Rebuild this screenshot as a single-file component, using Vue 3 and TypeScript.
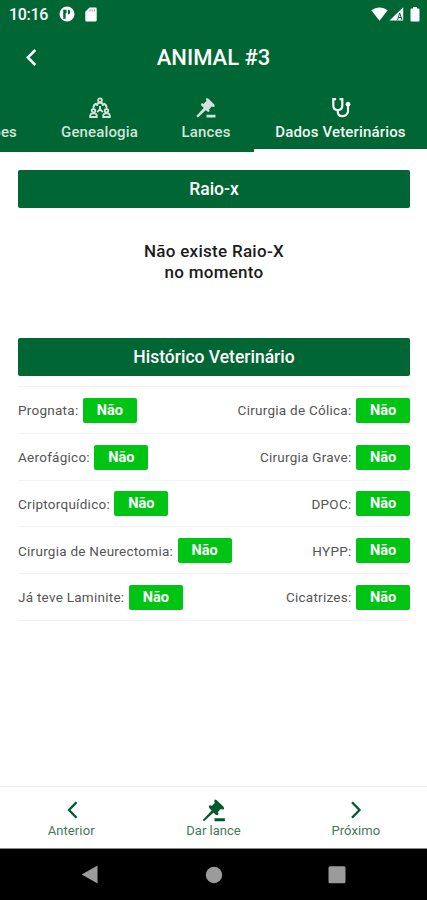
<script setup lang="ts">
interface Exam {
  label: string
  value: string
}

const rows: [Exam, Exam][] = [
  [{ label: 'Prognata:', value: 'Não' }, { label: 'Cirurgia de Cólica:', value: 'Não' }],
  [{ label: 'Aerofágico:', value: 'Não' }, { label: 'Cirurgia Grave:', value: 'Não' }],
  [{ label: 'Criptorquídico:', value: 'Não' }, { label: 'DPOC:', value: 'Não' }],
  [{ label: 'Cirurgia de Neurectomia:', value: 'Não' }, { label: 'HYPP:', value: 'Não' }],
  [{ label: 'Já teve Laminite:', value: 'Não' }, { label: 'Cicatrizes:', value: 'Não' }],
]
</script>

<template>
  <div class="screen">
    <header class="top">
      <div class="status">
        <span class="clock">10:16</span>
        <svg class="s-app" width="16" height="16" viewBox="0 0 16 16">
          <circle cx="8" cy="8" r="7.5" fill="#fff" />
          <path d="M4.200 3.800H7.600v3.400H6.600v5.600H4.200zM9 3.800a2.300 2.300 0 1 1 0 4.600z" fill="#006633" />
        </svg>
        <svg class="s-sd" width="12" height="15" viewBox="0 0 12 15">
          <path d="M4.500.5h6A1.200 1.200 0 0 1 11.700 1.700v11.600a1.200 1.200 0 0 1-1.200 1.200h-9A1.200 1.200 0 0 1 .3 13.300V4.700z" fill="#fff" />
          <path d="M5 2.500v2M7.200 2.500v2M9.400 2.500v2" stroke="#006633" stroke-width=".8" opacity=".75" />
        </svg>
        <span class="spacer"></span>
        <svg width="17" height="14" viewBox="0 0 17 14">
          <path d="M.3 3.300C5 -.6 12 -.6 16.700 3.300L8.500 13.700z" fill="#fff" />
        </svg>
        <svg class="s-cell" width="15" height="14" viewBox="0 0 15 14">
          <path d="M14.200.3v13.200H.5z" fill="#fff" />
          <path d="M8.500 13l2.200-7 2.300 7M9.300 10.500h3" fill="none" stroke="#006633" stroke-width="1" />
        </svg>
        <svg class="s-bat" width="10" height="15" viewBox="0 0 10 15">
          <path d="M3 0h4v1.500h1.600q.9 0 .9.900v11.200q0 .9-.9.900H1.400q-.9 0-.9-.9V2.400q0-.9.900-.9H3z" fill="#fff" />
        </svg>
      </div>
      <div class="appbar">
        <svg class="back" width="12" height="18" viewBox="0 0 12 18">
          <path d="M10.300 1L2.800 8.500l7.500 7.500" fill="none" stroke="#fff" stroke-width="2.500" />
        </svg>
        <h1>ANIMAL #3</h1>
      </div>
      <nav class="tabs">
        <div class="tab cut"><span>Informações</span></div>
        <div class="tab gen">
          <svg width="22" height="22" viewBox="0 0 22 22" fill="none" stroke="currentColor" stroke-width="1.900">
            <circle cx="11" cy="3.300" r="1.900" />
            <path d="M8.200 9V8q0-2.200 2.800-2.200t2.800 2.200v1M7.500 6.500Q4.700 7.500 4.300 10.800M14.500 6.500Q17.300 7.500 17.700 10.800M11 9v3.200M8.200 15.200l2.800-3 2.800 3" />
            <circle cx="4.500" cy="13.700" r="1.700" />
            <circle cx="17.500" cy="13.700" r="1.700" />
            <path d="M1.200 20v-1.200q0-2.400 3.300-2.400t3.300 2.400V20zM14.200 20v-1.200q0-2.400 3.300-2.400t3.300 2.400V20z" />
          </svg>
          <span>Genealogia</span>
        </div>
        <div class="tab lan">
          <svg width="22" height="22" viewBox="0 0 22 22" fill="currentColor">
            <path d="M11.500 1l1.800.5 6 6 .5 2-2 .4-.7-.7-3.200 3.200.7.700-.5 2-1.900-.5-5.900-6-.4-1.900 1.900-.4.600.7 3.200-3.200-.7-.7z" />
            <path d="M9.600 10l2.200 2.200-8.900 8.300-1.600-1.600zM11.500 17.700h9v2.800h-9z" />
          </svg>
          <span>Lances</span>
        </div>
        <div class="tab vet">
          <svg width="22" height="22" viewBox="0 0 22 22" fill="none" stroke="currentColor" stroke-width="2.200">
            <path d="M6.100 2.200H3.300v6.300q0 4.500 4.500 4.500t4.500-4.500V2.200H9.500" />
            <path d="M7.800 13v1.800q0 4.400 4.500 4.400t5.700-4.400V8.500" />
            <circle cx="18" cy="7.200" r="2.400" fill="currentColor" stroke="none" />
          </svg>
          <span>Dados Veterinários</span>
        </div>
      </nav>
    </header>

    <main>
      <h2>Raio-x</h2>
      <p class="empty">Não existe Raio-X<br />no momento</p>
      <h2>Histórico Veterinário</h2>
      <ul>
        <li v-for="(row, i) in rows" :key="i">
          <div v-for="exam in row" :key="exam.label" class="exam">
            <span class="label">{{ exam.label }}</span>
            <b class="badge">{{ exam.value }}</b>
          </div>
        </li>
      </ul>
    </main>

    <footer class="actions">
      <div class="action">
        <svg width="22" height="22" viewBox="0 0 22 22">
          <path d="M15.500 3.200L8 11l7.500 7.800" fill="none" stroke="currentColor" stroke-width="2.300" />
        </svg>
        <span>Anterior</span>
      </div>
      <div class="action">
        <svg width="24" height="23" viewBox="0 0 22 22" preserveAspectRatio="none" fill="currentColor">
          <path d="M11.500.5l1.800.5 6.500 6.500.5 2.200-2.200.4-.7-.7-3 3.200.7.700-.5 2.200-2.100-.5-5.900-6.500-.4-2.100 2.100-.4.600.7 3-3.200-.7-.7z" />
          <path d="M9.700 10l1.900 1.900-9.700 9.300-1.200-1.200zM11.500 18.500h9.500v2.700h-9.500z" />
        </svg>
        <span class="bid">Dar lance</span>
      </div>
      <div class="action">
        <svg width="22" height="22" viewBox="0 0 22 22">
          <path d="M7 3.200l7.500 7.800L7 18.800" fill="none" stroke="currentColor" stroke-width="2.300" />
        </svg>
        <span>Próximo</span>
      </div>
    </footer>
    <div class="sysnav">
      <svg width="18" height="20" viewBox="0 0 18 20"><path d="M.7 9.500L16.500.5v18z" fill="#9b9b9b" /></svg>
      <svg width="18" height="18" viewBox="0 0 18 18"><circle cx="9" cy="9" r="8.200" fill="#9b9b9b" /></svg>
      <svg width="18" height="18" viewBox="0 0 18 18"><rect x=".5" y=".3" width="17" height="17" rx="1.500" fill="#9b9b9b" /></svg>
    </div>
  </div>
</template>

<style>
body {
  margin: 0;
  background: #fff;
}
</style>

<style scoped>
.screen {
  width: 427px;
  height: 900px;
  display: flex;
  flex-direction: column;
  overflow: hidden;
  background: #fff;
  font-family: Roboto, "Liberation Sans", sans-serif;
}
svg {
  display: block;
  flex: none;
}
.top {
  height: 152px;
  background: #006633;
  color: #fff;
  overflow: hidden;
}
.status {
  height: 28px;
  display: flex;
  align-items: center;
  padding: 0 7px 0 9px;
  box-sizing: border-box;
}
.clock {
  font-size: 16px;
  font-weight: 500;
  width: 51px;
  letter-spacing: -0.3px;
}
.s-app {
  margin-left: -1px;
}
.s-sd {
  margin-left: 10px;
}
.spacer {
  flex: 1;
}
.s-cell {
  margin-left: 1px;
}
.s-bat {
  margin-left: 6px;
}
.appbar {
  height: 60px;
  display: grid;
  grid-template-columns: 25px 1fr 25px;
  align-items: center;
}
.back {
  justify-self: end;
  margin-right: -12px;
}
h1 {
  margin: 0;
  text-align: center;
  font-size: 22px;
  font-weight: 500;
  line-height: 26px;
}
.tabs {
  height: 64px;
  display: flex;
  justify-content: flex-end;
}
.tab {
  flex: none;
  box-sizing: border-box;
  display: flex;
  flex-direction: column;
  align-items: center;
  padding-top: 9px;
  color: #d2e3da;
  font-size: 15px;
  letter-spacing: 0.150px;
  font-weight: 500;
  line-height: 18px;
  white-space: nowrap;
}
.tab span {
  margin-top: 4px;
}
.tab.cut {
  width: 130px;
  align-items: flex-end;
  padding-right: 24px;
  padding-top: 31px;
}
.gen {
  width: 117px;
}
.lan {
  width: 96px;
}
.tab.vet {
  width: 173px;
  color: #f4f8f6;
  border-bottom: 3px solid #fff;
}
main {
  flex: 1;
  padding: 18px 17px 0 18px;
}
h2 {
  margin: 0;
  height: 38px;
  line-height: 38px;
  border-radius: 2px;
  background: #006633;
  color: #fff;
  text-align: center;
  font-size: 17.500px;
  font-weight: 500;
}
.empty {
  margin: 0;
  height: 130px;
  padding-top: 33px;
  box-sizing: border-box;
  text-align: center;
  font-size: 17px;
  letter-spacing: 0.280px;
  line-height: 20.500px;
  font-weight: 500;
  color: #1c1c1c;
}
ul {
  margin: 10px 0 0;
  padding: 0;
  list-style: none;
  border-top: 1px solid #f3f3f3;
}
li {
  height: 46.750px;
  box-sizing: border-box;
  border-bottom: 1px solid #f3f3f3;
  padding-top: 1px;
  display: flex;
  justify-content: space-between;
  align-items: center;
}
.exam {
  display: flex;
  align-items: center;
  gap: 4.500px;
}
.label {
  font-size: 13.500px;
  letter-spacing: 0.260px;
  color: #555;
}
.badge {
  width: 54px;
  height: 25px;
  line-height: 26px;
  border-radius: 2px;
  background: #00c414;
  color: #fff;
  text-align: center;
  font-size: 14.500px;
  font-weight: 700;
}
.actions {
  height: 63px;
  box-sizing: border-box;
  border-top: 1px solid #ededed;
  border-bottom: 1px solid #888;
  display: grid;
  grid-template-columns: repeat(3, 1fr);
  color: #005a2c;
}
.action {
  display: flex;
  flex-direction: column;
  align-items: center;
  padding-top: 12px;
  font-size: 13px;
  letter-spacing: 0.100px;
  line-height: 16px;
}
.action span {
  margin-top: 2px;
  color: #43785b;
}
.action svg {
  margin-left: 1px;
}
.action .bid {
  margin-top: 1px;
  letter-spacing: 0;
}
.sysnav {
  height: 51px;
  background: #000;
  display: flex;
  align-items: center;
  justify-content: space-between;
  padding: 0 81px 0 81px;
}
</style>
